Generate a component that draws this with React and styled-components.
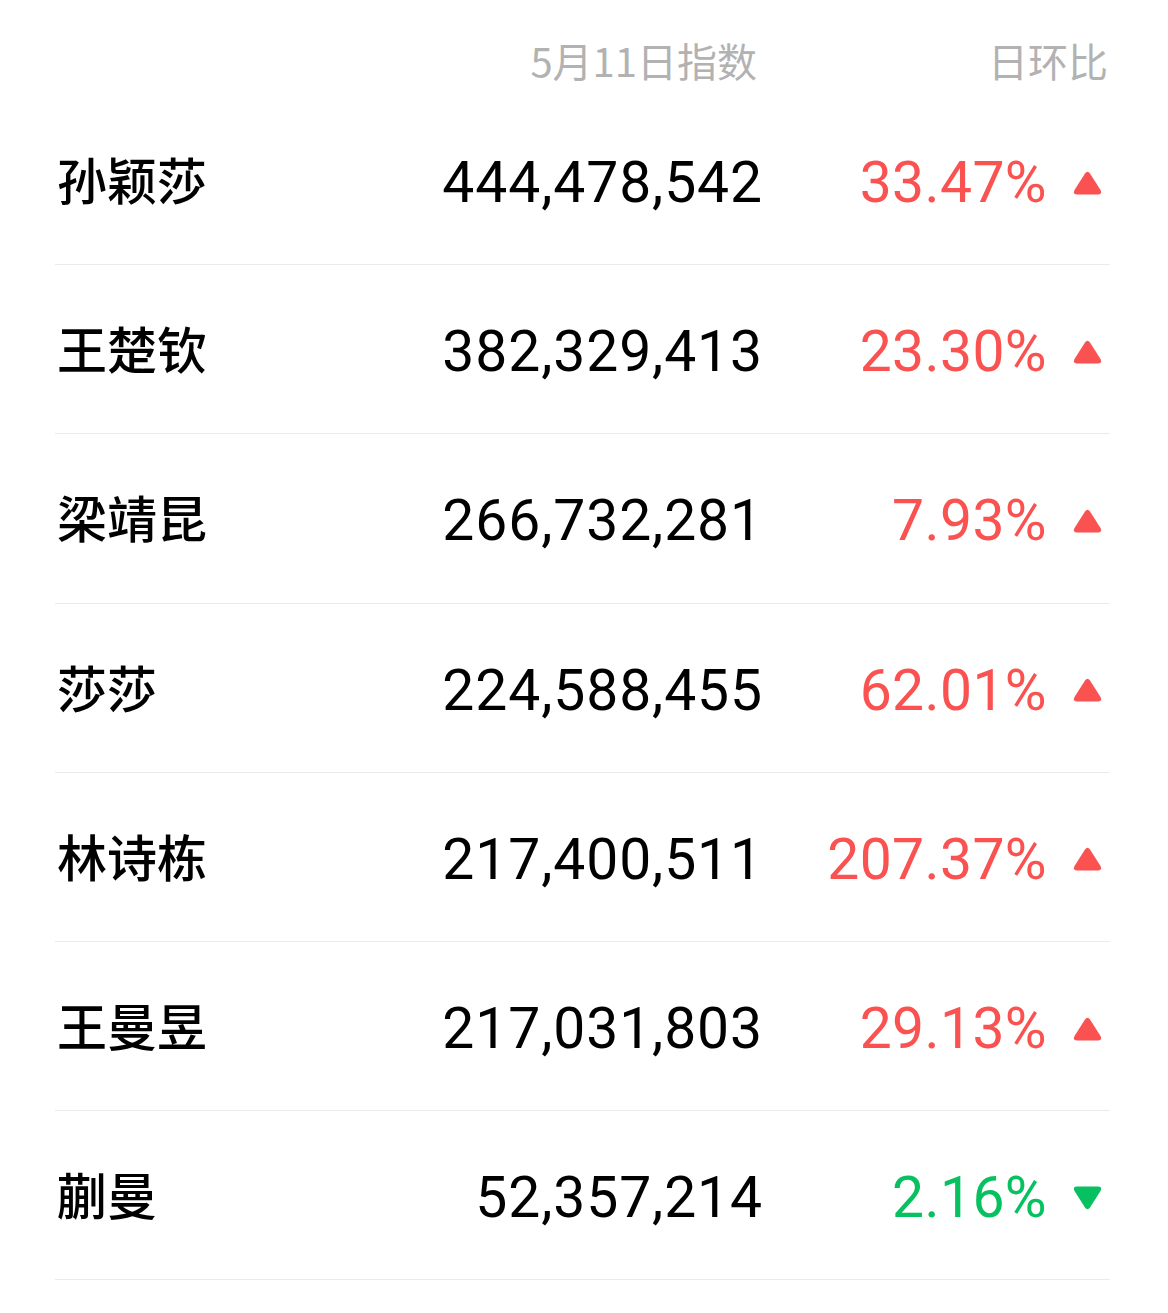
import React from "react";
import styled, { createGlobalStyle } from "styled-components";

const GlobalStyle = createGlobalStyle`
  html, body { margin: 0; padding: 0; background: #ffffff; }
  body { font-family: Roboto, "Noto Sans CJK SC", sans-serif; }
`;

const Page = styled.div`
  padding: 0 58px 0 55px;
  background: #fff;
`;

const Header = styled.div`
  display: grid;
  grid-template-columns: 1fr 360px 350px;
  align-items: center;
  height: 96px;
  padding-top: 24px;
  box-sizing: border-box;
  color: #b2b2b2;
  font-family: "Noto Sans CJK SC", sans-serif;
  font-size: 40px;
  line-height: 46px;
`;

const HeadCell = styled.div`
  text-align: right;
  padding-right: ${(p) => p.$pr || 0}px;
`;

const Row = styled.div`
  display: grid;
  grid-template-columns: 1fr 360px 285px 65px;
  align-items: center;
  height: 169.2px;
  box-sizing: border-box;
  border-bottom: 1px solid #ebebeb;
  padding-top: 5px;
`;

const Name = styled.div`
  font-family: "Noto Sans CJK SC", sans-serif;
  font-size: 50px;
  font-weight: 500;
  color: #000;
  padding-left: 2px;
  padding-bottom: 9px;
`;

const Value = styled.div`
  font-family: Roboto, sans-serif;
  font-size: 57px;
  color: #000;
  text-align: right;
  letter-spacing: 0.9px;
  margin-right: -3px;
`;

const Change = styled.div`
  font-family: Roboto, sans-serif;
  font-size: 57px;
  text-align: right;
  letter-spacing: 0.4px;
  margin-right: -2px;
  color: ${(p) => (p.$up ? "#fa5151" : "#07c160")};
`;

const ArrowBox = styled.div`
  display: flex;
  align-items: center;
  padding-left: 28px;
`;

const Arrow = ({ up }) => (
  <svg width="29" height="26" viewBox="0 0 29 26">
    {up ? (
      <path
        d="M12 3.5 Q14.5 0 17 3.5 L27.5 20 Q29.5 24.5 25 24.5 L4 24.5 Q-0.5 24.5 1.5 20 Z"
        fill="#fa5151"
      />
    ) : (
      <path
        d="M12 22.5 Q14.5 26 17 22.5 L27.5 6 Q29.5 1.5 25 1.5 L4 1.5 Q-0.5 1.5 1.5 6 Z"
        fill="#07c160"
      />
    )}
  </svg>
);

const data = [
  { name: "孙颖莎", value: "444,478,542", change: "33.47%", up: true },
  { name: "王楚钦", value: "382,329,413", change: "23.30%", up: true },
  { name: "梁靖昆", value: "266,732,281", change: "7.93%", up: true },
  { name: "莎莎", value: "224,588,455", change: "62.01%", up: true },
  { name: "林诗栋", value: "217,400,511", change: "207.37%", up: true },
  { name: "王曼昱", value: "217,031,803", change: "29.13%", up: true },
  { name: "蒯曼", value: "52,357,214", change: "2.16%", up: false },
];

export default function App() {
  return (
    <>
      <GlobalStyle />
      <Page>
        <Header>
          <div />
          <HeadCell $pr={3}>5月11日指数</HeadCell>
          <HeadCell $pr={2}>日环比</HeadCell>
        </Header>
        {data.map((d) => (
          <Row key={d.name}>
            <Name>{d.name}</Name>
            <Value>{d.value}</Value>
            <Change $up={d.up}>{d.change}</Change>
            <ArrowBox>
              <Arrow up={d.up} />
            </ArrowBox>
          </Row>
        ))}
      </Page>
    </>
  );
}
